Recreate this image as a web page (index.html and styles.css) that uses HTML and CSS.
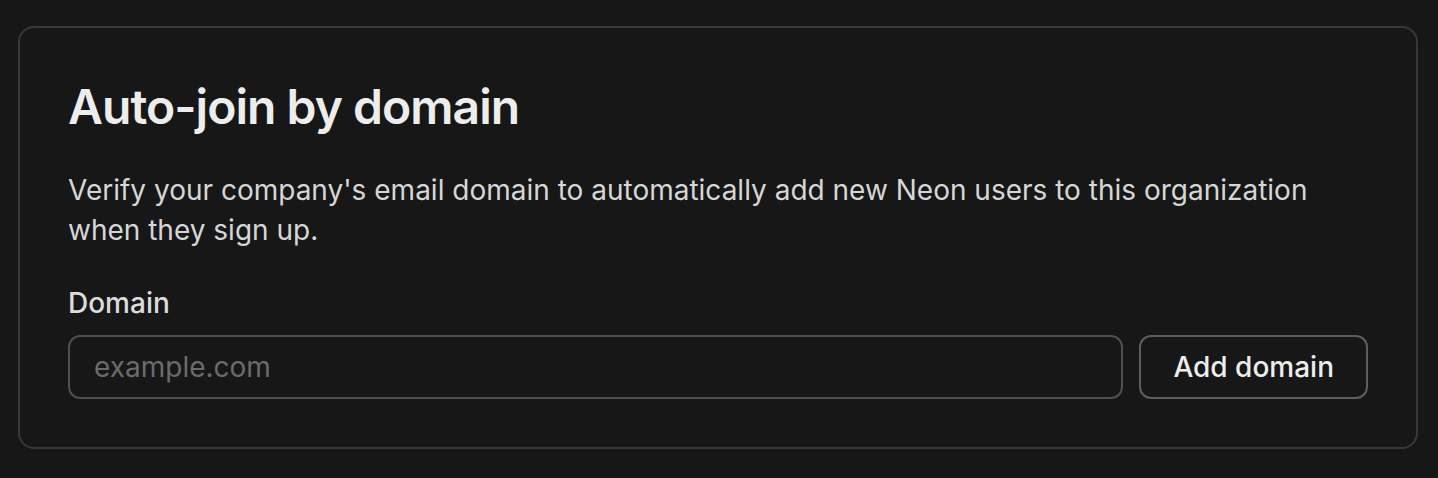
FILE: index.html
```html
<!DOCTYPE html>
<html lang="en">
<head>
<meta charset="utf-8">
<title>Auto-join by domain</title>
<link rel="stylesheet" href="styles.css">
</head>
<body>
<main class="page">
  <section class="card">
    <h2 class="card-title">Auto-join by domain</h2>
    <p class="card-desc">Verify your company's email domain to automatically add new Neon users to this organization when they sign up.</p>
    <label class="field-label" for="domain">Domain</label>
    <div class="field-row">
      <input id="domain" class="text-input" type="text" placeholder="example.com">
      <button class="btn" type="button">Add domain</button>
    </div>
  </section>
</main>
</body>
</html>
```

FILE: styles.css
```css
* { box-sizing: border-box; }
html, body {
  margin: 0;
  background: #171717;
}
body {
  font-family: Inter, "Noto Sans", sans-serif;
  color: #ededed;
}
.page {
  padding: 26px 20px 0 18px;
}
.card {
  width: 1400px;
  border: 2px solid #383838;
  border-radius: 16px;
  padding: 51px 48px 48px 48px;
  display: flex;
  flex-direction: column;
}
.card-title {
  margin: 0 0 35px;
  font-size: 48px;
  line-height: 56px;
  font-weight: 600;
  letter-spacing: -0.96px;
  color: #ededed;
}
.card-desc {
  margin: 0;
  font-size: 28px;
  line-height: 40px;
  font-weight: 400;
  color: #d6d6d6;
}
.field-label {
  margin-top: 33px;
  font-size: 28px;
  line-height: 40px;
  font-weight: 500;
  color: #dcdcdc;
}
.field-row {
  margin-top: 12px;
  display: flex;
  gap: 16px;
}
.text-input {
  flex: 1;
  height: 64px;
  border: 2px solid #4f4f4f;
  border-radius: 12px;
  background: transparent;
  padding: 0 24px;
  font-family: inherit;
  font-size: 28px;
  color: #ededed;
  outline: none;
}
.text-input::placeholder {
  color: #6b6b6b;
}
.btn {
  height: 64px;
  padding: 0 32px;
  border: 2px solid #5e5e5e;
  border-radius: 12px;
  background: transparent;
  font-family: inherit;
  font-size: 28px;
  font-weight: 500;
  color: #ededed;
  cursor: pointer;
}
```
